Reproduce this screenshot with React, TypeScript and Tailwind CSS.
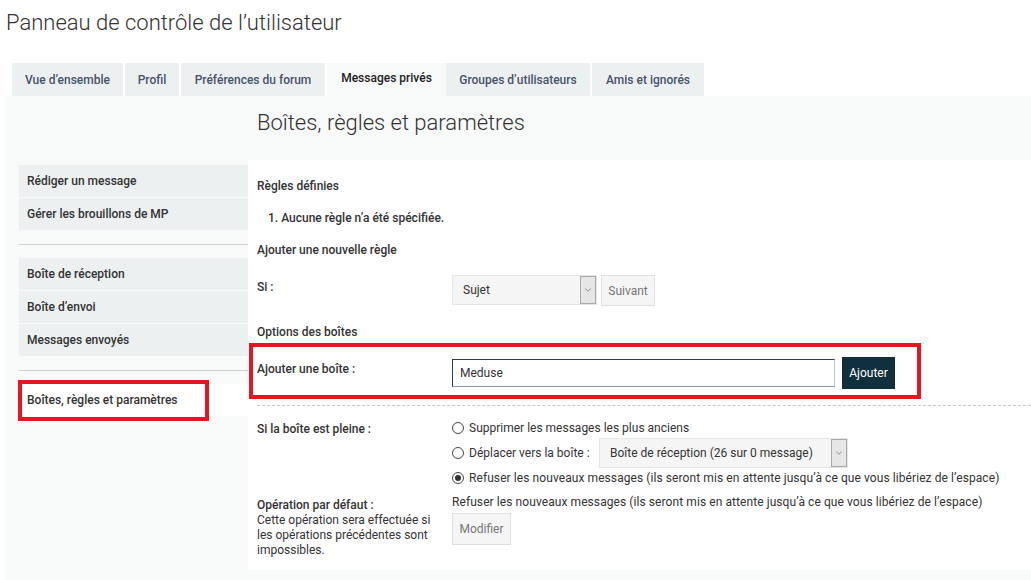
import { ChevronDown } from 'lucide-react'

const tabs = [
  { label: 'Vue d’ensemble', w: 'w-[111px]' },
  { label: 'Profil', w: 'w-[54px]' },
  { label: 'Préférences du forum', w: 'w-[144px]' },
  { label: 'Messages privés', w: 'w-[119px]', active: true },
  { label: 'Groupes d’utilisateurs', w: 'w-[144px]' },
  { label: 'Amis et ignorés', w: 'w-[112px]' },
]

function MenuItem({ label, active }: { label: string; active?: boolean }) {
  return (
    <div
      className={`h-[32px] flex items-center pl-2 text-[12px] font-medium text-[#333] ${
        active ? 'bg-white' : 'bg-[#ecf0f1]'
      }`}
    >
      {label}
    </div>
  )
}

function Select({ value, w }: { value: string; w: string }) {
  return (
    <div className={`flex h-[30px] ${w} bg-[#f5f5f5] border border-[#e6e6e6]`}>
      <div className="flex-1 flex items-center pl-[10px] text-[12px] text-[#333]">{value}</div>
      <div className="w-[16px] flex items-center justify-center bg-[#e6e6e6] border border-[#a9a9a9]">
        <ChevronDown size={10} strokeWidth={1.5} className="text-[#555]" />
      </div>
    </div>
  )
}

function Radio({ checked }: { checked?: boolean }) {
  return (
    <span className="w-[12px] h-[12px] rounded-full border border-[#444] bg-white flex items-center justify-center mr-[5px] shrink-0">
      {checked && <span className="w-[6px] h-[6px] rounded-full bg-[#333]" />}
    </span>
  )
}

export default function App() {
  return (
    <div className="w-[1031px] h-[580px] bg-white overflow-hidden text-[#333]" style={{ fontFamily: 'Roboto, "Liberation Sans", sans-serif' }}>
      <h1 className="h-[44px] pl-[6px] pt-[9px] text-[22px] font-light leading-[27px] text-[#333]">
        Panneau de contrôle de l’utilisateur
      </h1>

      {/* Tabs */}
      <div className="flex pl-[12px] mt-[19px]">
        {tabs.map((t, i) => (
          <div
            key={t.label}
            className={`${t.w} h-[33px] flex items-center justify-center text-[12px] font-medium ${
              i > 0 && !t.active && !tabs[i - 1].active ? 'ml-[2px]' : ''
            } ${t.active ? 'ml-[2px] bg-[#f8f9f9] text-[#222] pb-[4px]' : 'bg-[#ecf0f1] text-[#47536b]'}`}
          >
            {t.label}
          </div>
        ))}
      </div>

      {/* Panel */}
      <div className="ml-[5px] bg-[#f8f9f9] h-[484px] relative">
        <h2 className="h-[64px] pl-[252px] pt-[13px] text-[22px] font-light leading-[27px] text-[#333]">
          Boîtes, règles et paramètres
        </h2>

        <div className="flex">
          {/* Sidebar */}
          <div className="w-[243px] pl-[14px] pt-[5px]">
            <div className="flex flex-col gap-px">
              <MenuItem label="Rédiger un message" />
              <MenuItem label="Gérer les brouillons de MP" />
            </div>
            <div className="h-px bg-[#cfcfcf] mt-[14px] mb-[13px]" />
            <div className="flex flex-col gap-px">
              <MenuItem label="Boîte de réception" />
              <MenuItem label="Boîte d’envoi" />
              <MenuItem label="Messages envoyés" />
            </div>
            <div className="h-px bg-[#cfcfcf] mt-[14px] mb-[13px]" />
            <MenuItem label="Boîtes, règles et paramètres" active />
          </div>

          {/* Content */}
          <div className="flex-1 bg-white h-[410px] pl-[9px] pt-[10px] text-[12px]">
            <div className="h-[32px] flex items-center font-medium">Règles définies</div>
            <div className="h-[32px] flex items-center pl-[11px] font-medium">1. Aucune règle n’a été spécifiée.</div>
            <div className="h-[32px] flex items-center font-medium">Ajouter une nouvelle règle</div>
            <div className="flex pt-[9px] pb-[10px]">
              <div className="w-[195px] pt-[3px] font-medium">Si :</div>
              <Select value="Sujet" w="w-[145px]" />
              <div className="ml-[4px] h-[31px] w-[54px] flex items-center justify-center bg-[#f5f5f5] border border-[#e0e0e0] text-[#777]">
                Suivant
              </div>
            </div>
            <div className="h-[32px] flex items-center font-medium">Options des boîtes</div>
            <div className="flex pt-[9px] pb-[16px] border-b border-dashed border-[#c8c8c8]">
              <div className="w-[195px] pt-[3px] font-medium">Ajouter une boîte :</div>
              <div className="mt-[2px] w-[383px] h-[28px] border border-[#2d3e48] border-b-[#8a9aa2] border-r-[#b8c2c6] flex items-center pl-[7px] text-[#333]">
                Meduse
              </div>
              <div className="ml-[7px] h-[32px] w-[53px] flex items-center justify-center bg-[#11303d] text-white">
                Ajouter
              </div>
            </div>

            <div className="flex pt-[14px]">
              <div className="w-[195px] pt-[1px] font-medium leading-[16px]">Si la boîte est pleine :</div>
              <div className="flex flex-col">
                <div className="flex items-center h-[16px]">
                  <Radio />
                  <span>Supprimer les messages les plus anciens</span>
                </div>
                <div className="flex items-center h-[29px] mt-[2px]">
                  <Radio />
                  <span className="w-[130px]">Déplacer vers la boîte :</span>
                  <Select value="Boîte de réception (26 sur 0 message)" w="w-[249px]" />
                </div>
                <div className="flex items-center h-[16px] mt-[3px] tracking-[0.08px]">
                  <Radio checked />
                  <span>Refuser les nouveaux messages (ils seront mis en attente jusqu’à ce que vous libériez de l’espace)</span>
                </div>
              </div>
            </div>

            <div className="flex pt-[8px]">
              <div className="w-[195px] pt-[4px] leading-[15px]">
                <div className="font-medium">Opération par défaut :</div>
                <div className="pr-[4px]">Cette opération sera effectuée si les opérations précédentes sont impossibles.</div>
              </div>
              <div className="flex flex-col">
                <div className="h-[16px] flex items-center tracking-[0.08px]">
                  Refuser les nouveaux messages (ils seront mis en attente jusqu’à ce que vous libériez de l’espace)
                </div>
                <div className="mt-[3px] h-[32px] w-[59px] flex items-center justify-center bg-[#f5f5f5] border border-[#e0e0e0] text-[#777]">
                  Modifier
                </div>
              </div>
            </div>
          </div>
        </div>

        {/* Annotation boxes */}
        <div className="absolute left-[13px] top-[284px] w-[191px] h-[41px] border-[4px] border-[#e8141f] pointer-events-none" />
        <div className="absolute left-[244px] top-[247px] w-[672px] h-[56px] border-[4px] border-[#e8141f] pointer-events-none" />
      </div>
    </div>
  )
}
